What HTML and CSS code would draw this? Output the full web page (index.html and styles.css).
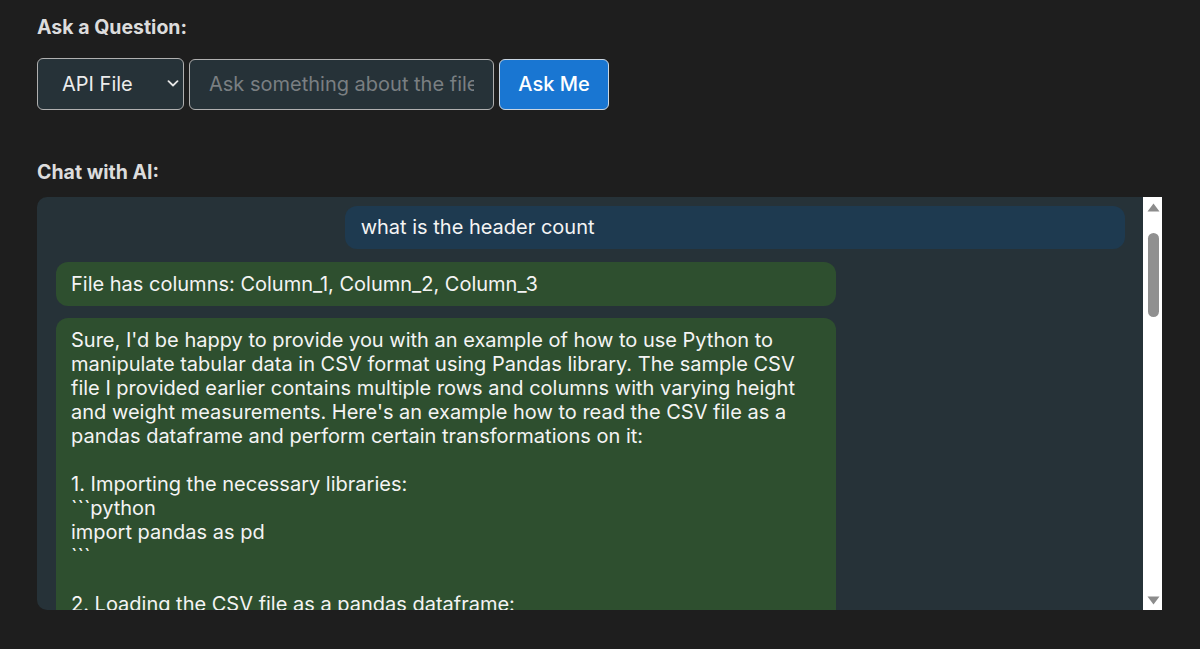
FILE: index.html
```html
<!DOCTYPE html>
<html lang="en">
<head>
<meta charset="utf-8">
<title>Ask a Question</title>
<link rel="stylesheet" href="styles.css">
</head>
<body>
<main class="app">
  <h3 class="section-label">Ask a Question:</h3>
  <div class="ask-row">
    <div class="select-wrap">
      <select class="file-select">
        <option>API File</option>
      </select>
      <svg class="chevron" width="12" height="7" viewBox="0 0 12 7"><path d="M1.5 1.2 L6 5.5 L10.5 1.2" fill="none" stroke="#e6e6e6" stroke-width="1.8" stroke-linecap="round" stroke-linejoin="round"/></svg>
    </div>
    <input class="question-input" type="text" placeholder="Ask something about the file">
    <button class="ask-btn">Ask Me</button>
  </div>

  <h3 class="section-label chat-label">Chat with AI:</h3>
  <div class="chat-frame">
    <div class="chat-box">
      <div class="msg user">what is the header count</div>
      <div class="msg ai">File has columns: Column_1, Column_2, Column_3</div>
      <div class="msg ai long">Sure, I'd be happy to provide you with an example of how to use Python to manipulate tabular data in CSV format using Pandas library. The sample CSV file I provided earlier contains multiple rows and columns with varying height and weight measurements. Here's an example how to read the CSV file as a pandas dataframe and perform certain transformations on it:

1. Importing the necessary libraries:
&#96;&#96;&#96;python
import pandas as pd
&#96;&#96;&#96;

2. Loading the CSV file as a pandas dataframe:
&#96;&#96;&#96;python
df = pd.read_csv('sample.csv')
&#96;&#96;&#96;</div>
    </div>
    <div class="scrollbar" aria-hidden="true">
      <div class="sb-btn sb-up">
        <svg width="13" height="9" viewBox="0 0 13 9"><path d="M6.5 0.5 L12.5 8.5 L0.5 8.5 Z" fill="#8c8c8c"/></svg>
      </div>
      <div class="sb-track">
        <div class="sb-thumb"></div>
      </div>
      <div class="sb-btn sb-down">
        <svg width="13" height="9" viewBox="0 0 13 9"><path d="M0.5 0.5 L12.5 0.5 L6.5 8.5 Z" fill="#8c8c8c"/></svg>
      </div>
    </div>
  </div>
</main>
</body>
</html>
```

FILE: styles.css
```css
html, body {
  margin: 0;
  padding: 0;
  background: #1e1e1e;
}

body {
  font-family: Inter, "Noto Sans", "Liberation Sans", sans-serif;
  color: #e0e0e0;
}

.app {
  padding: 15px 37px 0 37px;
  width: 1125px;
}

.section-label {
  margin: 0;
  font-size: 19.5px;
  line-height: 24px;
  font-weight: 700;
  color: #dcdcdc;
}

.ask-row {
  display: flex;
  align-items: center;
  gap: 5px;
  margin-top: 19px;
  height: 52px;
}

.select-wrap {
  position: relative;
  width: 147px;
  height: 52px;
}

.file-select {
  appearance: none;
  -webkit-appearance: none;
  width: 100%;
  height: 100%;
  box-sizing: border-box;
  background: #263238;
  color: #ececec;
  border: 1px solid #b0b0b0;
  border-radius: 6px;
  font-family: inherit;
  font-size: 20px;
  padding: 0 0 0 24px;
  outline: none;
}

.chevron {
  position: absolute;
  right: 5px;
  top: 22px;
  pointer-events: none;
}

.question-input {
  width: 305px;
  height: 51px;
  box-sizing: border-box;
  background: #263238;
  color: #ececec;
  border: 1px solid #b0b0b0;
  border-radius: 6px;
  font-family: inherit;
  font-size: 20px;
  padding: 0 19px;
  outline: none;
}

.question-input::placeholder {
  color: #7a7f82;
}

.ask-btn {
  width: 110px;
  height: 51px;
  box-sizing: border-box;
  background: #1976d2;
  color: #ffffff;
  border: 1px solid #c9d6e3;
  border-radius: 6px;
  font-family: inherit;
  font-size: 20px;
  font-weight: 500;
  cursor: pointer;
}

.chat-label {
  margin-top: 50px;
}

.chat-frame {
  margin-top: 13px;
  height: 413px;
  display: flex;
  border-radius: 10px 0 0 10px;
  overflow: hidden;
}

.chat-box {
  flex: 1;
  min-width: 0;
  box-sizing: border-box;
  background: #263238;
  overflow: hidden;
  padding: 9px 18px 0 19px;
  display: flex;
  flex-direction: column;
  gap: 12px;
}

.scrollbar {
  width: 19px;
  flex-shrink: 0;
  background: #ffffff;
  display: flex;
  flex-direction: column;
}

.sb-btn {
  display: flex;
  justify-content: center;
  padding-left: 1px;
}

.sb-up {
  height: 36px;
  align-items: flex-start;
  box-sizing: border-box;
  padding-top: 6px;
}

.sb-track {
  flex: 1;
  display: flex;
  flex-direction: column;
  align-items: center;
  padding-left: 1px;
}

.sb-thumb {
  width: 11px;
  height: 84px;
  border-radius: 6px;
  background: #909090;
}

.sb-down {
  height: 24px;
  align-items: flex-end;
  box-sizing: border-box;
  padding-bottom: 5px;
}

.msg {
  width: 73%;
  box-sizing: border-box;
  padding: 10px 15px;
  border-radius: 12px;
  font-size: 20px;
  line-height: 24px;
  color: #f4f4f4;
  flex-shrink: 0;
}

.msg.user {
  align-self: flex-end;
  background: #1e3a50;
  padding: 9px 16px 10px;
  margin-bottom: 1px;
}

.msg.ai {
  align-self: flex-start;
  background: #2e4f2f;
}

.msg.long {
  white-space: pre-wrap;
}
```
